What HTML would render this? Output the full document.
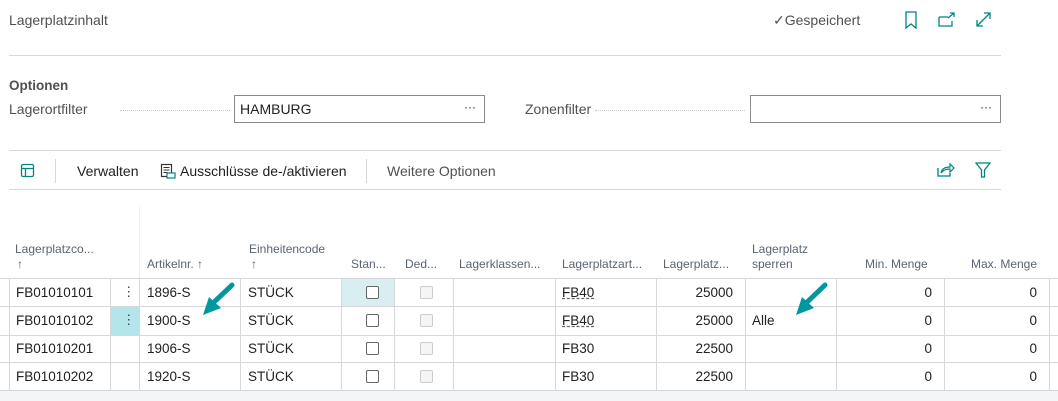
<!DOCTYPE html>
<html><head><meta charset="utf-8"><style>
*{margin:0;padding:0;box-sizing:border-box}
body{width:1058px;height:401px;background:#fff;font-family:"Liberation Sans",sans-serif;position:relative;overflow:hidden;color:#212121}
.a{position:absolute;white-space:nowrap}
.hl{position:absolute;height:1px;background:#d6d8dc}
.vl{position:absolute;width:1px;background:#d6d8dc}
.h{position:absolute;font-size:12px;color:#5a6472;white-space:nowrap}
.c{position:absolute;font-size:13.5px;color:#212121;white-space:nowrap}
.cb{position:absolute;width:13px;height:13px;border:1px solid #666;border-radius:2px;background:#fff}
.cbd{position:absolute;width:13px;height:13px;border:1px solid #ccc;border-radius:2px;background:#f5f5f5}
.dots{position:absolute;border-bottom:1px dotted #c8c8c8;height:1px}
</style></head><body>
<div class="a" style="left:9px;top:12px;font-size:14px;color:#505050">Lagerplatzinhalt</div>
<div class="a" style="left:773px;top:12px;font-size:14px;color:#505050">✓Gespeichert</div>
<svg class="a" style="left:904px;top:11px" width="14" height="18" viewBox="0 0 14 18"><path d="M2 1h10v16l-5-4-5 4z" fill="none" stroke="#00857f" stroke-width="1.3"/></svg>
<svg class="a" style="left:938px;top:12px" width="18" height="16" viewBox="0 0 18 16"><path d="M1 5h9M1 5v9h13V9" fill="none" stroke="#00857f" stroke-width="1.3"/><path d="M10 6l6-5M12 1h4v4" fill="none" stroke="#00857f" stroke-width="1.3"/></svg>
<svg class="a" style="left:975px;top:11px" width="17" height="17" viewBox="0 0 17 17"><path d="M2 15L15 2M2 9v6h6M9 2h6v6" fill="none" stroke="#00857f" stroke-width="1.3"/></svg>
<div class="hl" style="left:9px;top:55px;width:992px"></div>
<div class="a" style="left:9px;top:78px;font-size:13.5px;font-weight:bold;color:#505050">Optionen</div>
<div class="a" style="left:9px;top:101px;font-size:14px;color:#505050">Lagerortfilter</div>
<div class="dots" style="left:120px;top:110px;width:110px"></div>
<div class="a" style="left:234px;top:95px;width:251px;height:28px;border:1px solid #8a8a8a"></div>
<div class="a" style="left:240px;top:101px;font-size:14px">HAMBURG</div>
<div class="a" style="left:464px;top:100px;font-size:12px">···</div>
<div class="a" style="left:525px;top:101px;font-size:14px;color:#505050">Zonenfilter</div>
<div class="dots" style="left:595px;top:110px;width:150px"></div>
<div class="a" style="left:750px;top:95px;width:251px;height:28px;border:1px solid #8a8a8a"></div>
<div class="a" style="left:980px;top:100px;font-size:12px">···</div>
<div class="hl" style="left:9px;top:150px;width:992px"></div>
<svg class="a" style="left:20px;top:163px" width="16" height="16" viewBox="0 0 16 16"><rect x="1.5" y="1.5" width="12" height="12" rx="1.5" fill="none" stroke="#00857f" stroke-width="1.3"/><path d="M1.5 5.5h12M5.5 5.5v8" stroke="#00857f" stroke-width="1.3"/></svg>
<div class="vl" style="left:55px;top:159px;height:24px"></div>
<div class="a" style="left:77px;top:163px;font-size:14px">Verwalten</div>
<svg class="a" style="left:160px;top:163px" width="16" height="16" viewBox="0 0 16 16"><rect x="1.5" y="1.5" width="10" height="12" fill="none" stroke="#333" stroke-width="1.2"/><path d="M3.5 4.5h6M3.5 7h6M3.5 9.5h4" stroke="#333"/><rect x="7" y="10" width="8" height="5" fill="#fff" stroke="#00857f" stroke-width="1.2"/></svg>
<div class="a" style="left:180px;top:163px;font-size:14px">Ausschlüsse de-/aktivieren</div>
<div class="vl" style="left:366px;top:159px;height:24px"></div>
<div class="a" style="left:387px;top:163px;font-size:14px;color:#505050">Weitere Optionen</div>
<svg class="a" style="left:937px;top:162px" width="18" height="16" viewBox="0 0 18 16"><path d="M1 6v8h12v-3" fill="none" stroke="#00857f" stroke-width="1.3"/><path d="M4 11c1-5 5-6 9-6V2l4 4-4 4V7c-4 0-7 1-9 4z" fill="none" stroke="#00857f" stroke-width="1.2"/></svg>
<svg class="a" style="left:975px;top:162px" width="16" height="16" viewBox="0 0 16 16"><path d="M1 1h14L9.5 8v7h-3V8z" fill="none" stroke="#00857f" stroke-width="1.3"/></svg>
<div class="hl" style="left:9px;top:189px;width:992px"></div>

<div class="vl" style="left:139px;top:207px;height:71px;background:#eceef0"></div>
<div class="h" style="left:15px;top:242px">Lagerplatzco...</div>
<div class="h" style="left:17px;top:257px">↑</div>
<div class="h" style="left:147px;top:257px">Artikelnr. ↑</div>
<div class="h" style="left:249px;top:242px">Einheitencode</div>
<div class="h" style="left:251px;top:257px">↑</div>
<div class="h" style="left:351px;top:257px">Stan...</div>
<div class="h" style="left:405px;top:257px">Ded...</div>
<div class="h" style="left:459px;top:257px">Lagerklassen...</div>
<div class="h" style="left:562px;top:257px">Lagerplatzart...</div>
<div class="h" style="left:663px;top:257px">Lagerplatz...</div>
<div class="h" style="left:752px;top:242px">Lagerplatz</div>
<div class="h" style="left:752px;top:257px">sperren</div>
<div class="h" style="left:865px;top:257px">Min. Menge</div>
<div class="h" style="left:971px;top:257px">Max. Menge</div>

<div class="a" style="left:341px;top:278px;width:53px;height:28px;background:#d9eef0"></div>
<div class="a" style="left:110px;top:306px;width:29px;height:29px;background:#b3e5ea"></div>

<div class="hl" style="left:0;top:278px;width:1058px"></div>
<div class="hl" style="left:0;top:306px;width:1058px"></div>
<div class="hl" style="left:0;top:335px;width:1058px"></div>
<div class="hl" style="left:0;top:362px;width:1058px"></div>
<div class="hl" style="left:0;top:390px;width:1058px"></div>
<div class="a" style="left:0;top:391px;width:1058px;height:10px;background:#f4f5f7"></div>
<div class="vl" style="left:9px;top:278px;height:112px"></div>
<div class="vl" style="left:110px;top:278px;height:112px"></div>
<div class="vl" style="left:139px;top:278px;height:112px"></div>
<div class="vl" style="left:240px;top:278px;height:112px"></div>
<div class="vl" style="left:341px;top:278px;height:112px"></div>
<div class="vl" style="left:394px;top:278px;height:112px"></div>
<div class="vl" style="left:453px;top:278px;height:112px"></div>
<div class="vl" style="left:555px;top:278px;height:112px"></div>
<div class="vl" style="left:656px;top:278px;height:112px"></div>
<div class="vl" style="left:745px;top:278px;height:112px"></div>
<div class="vl" style="left:836px;top:278px;height:112px"></div>
<div class="vl" style="left:944px;top:278px;height:112px"></div>
<div class="vl" style="left:1049px;top:278px;height:112px"></div>

<div class="c" style="left:16px;top:285px">FB01010101</div>
<div class="c" style="left:16px;top:313px">FB01010102</div>
<div class="c" style="left:16px;top:341px">FB01010201</div>
<div class="c" style="left:16px;top:369px">FB01010202</div>
<div class="c" style="left:122px;top:284px;color:#444">⋮</div>
<div class="c" style="left:122px;top:312px;color:#444">⋮</div>
<div class="c" style="left:147px;top:285px">1896-S</div>
<div class="c" style="left:147px;top:313px">1900-S</div>
<div class="c" style="left:147px;top:341px">1906-S</div>
<div class="c" style="left:147px;top:369px">1920-S</div>
<div class="c" style="left:248px;top:285px">STÜCK</div>
<div class="c" style="left:248px;top:313px">STÜCK</div>
<div class="c" style="left:248px;top:341px">STÜCK</div>
<div class="c" style="left:248px;top:369px">STÜCK</div>
<div class="cb" style="left:366px;top:286px"></div>
<div class="cb" style="left:366px;top:314px"></div>
<div class="cb" style="left:366px;top:342px"></div>
<div class="cb" style="left:366px;top:370px"></div>
<div class="cbd" style="left:420px;top:286px"></div>
<div class="cbd" style="left:420px;top:314px"></div>
<div class="cbd" style="left:420px;top:342px"></div>
<div class="cbd" style="left:420px;top:370px"></div>
<div class="c" style="left:562px;top:285px;text-decoration:underline dashed #666">FB40</div>
<div class="c" style="left:562px;top:313px;text-decoration:underline dashed #666">FB40</div>
<div class="c" style="left:562px;top:341px">FB30</div>
<div class="c" style="left:562px;top:369px">FB30</div>
<div class="c" style="left:680px;top:285px;width:53px;text-align:right">25000</div>
<div class="c" style="left:680px;top:313px;width:53px;text-align:right">25000</div>
<div class="c" style="left:680px;top:341px;width:53px;text-align:right">22500</div>
<div class="c" style="left:680px;top:369px;width:53px;text-align:right">22500</div>
<div class="c" style="left:752px;top:313px">Alle</div>
<div class="c" style="left:880px;top:285px;width:52px;text-align:right">0</div>
<div class="c" style="left:880px;top:313px;width:52px;text-align:right">0</div>
<div class="c" style="left:880px;top:341px;width:52px;text-align:right">0</div>
<div class="c" style="left:880px;top:369px;width:52px;text-align:right">0</div>
<div class="c" style="left:985px;top:285px;width:52px;text-align:right">0</div>
<div class="c" style="left:985px;top:313px;width:52px;text-align:right">0</div>
<div class="c" style="left:985px;top:341px;width:52px;text-align:right">0</div>
<div class="c" style="left:985px;top:369px;width:52px;text-align:right">0</div>

<svg class="a" style="left:195px;top:280px" width="45" height="40" viewBox="0 0 45 40"><path d="M37 5L17 24" stroke="#00979e" stroke-width="5" stroke-linecap="round"/><path d="M8 35l6-18 12 11z" fill="#00979e"/></svg>
<svg class="a" style="left:788px;top:280px" width="45" height="40" viewBox="0 0 45 40"><path d="M37 5L17 24" stroke="#00979e" stroke-width="5" stroke-linecap="round"/><path d="M8 35l6-18 12 11z" fill="#00979e"/></svg>
</body></html>
